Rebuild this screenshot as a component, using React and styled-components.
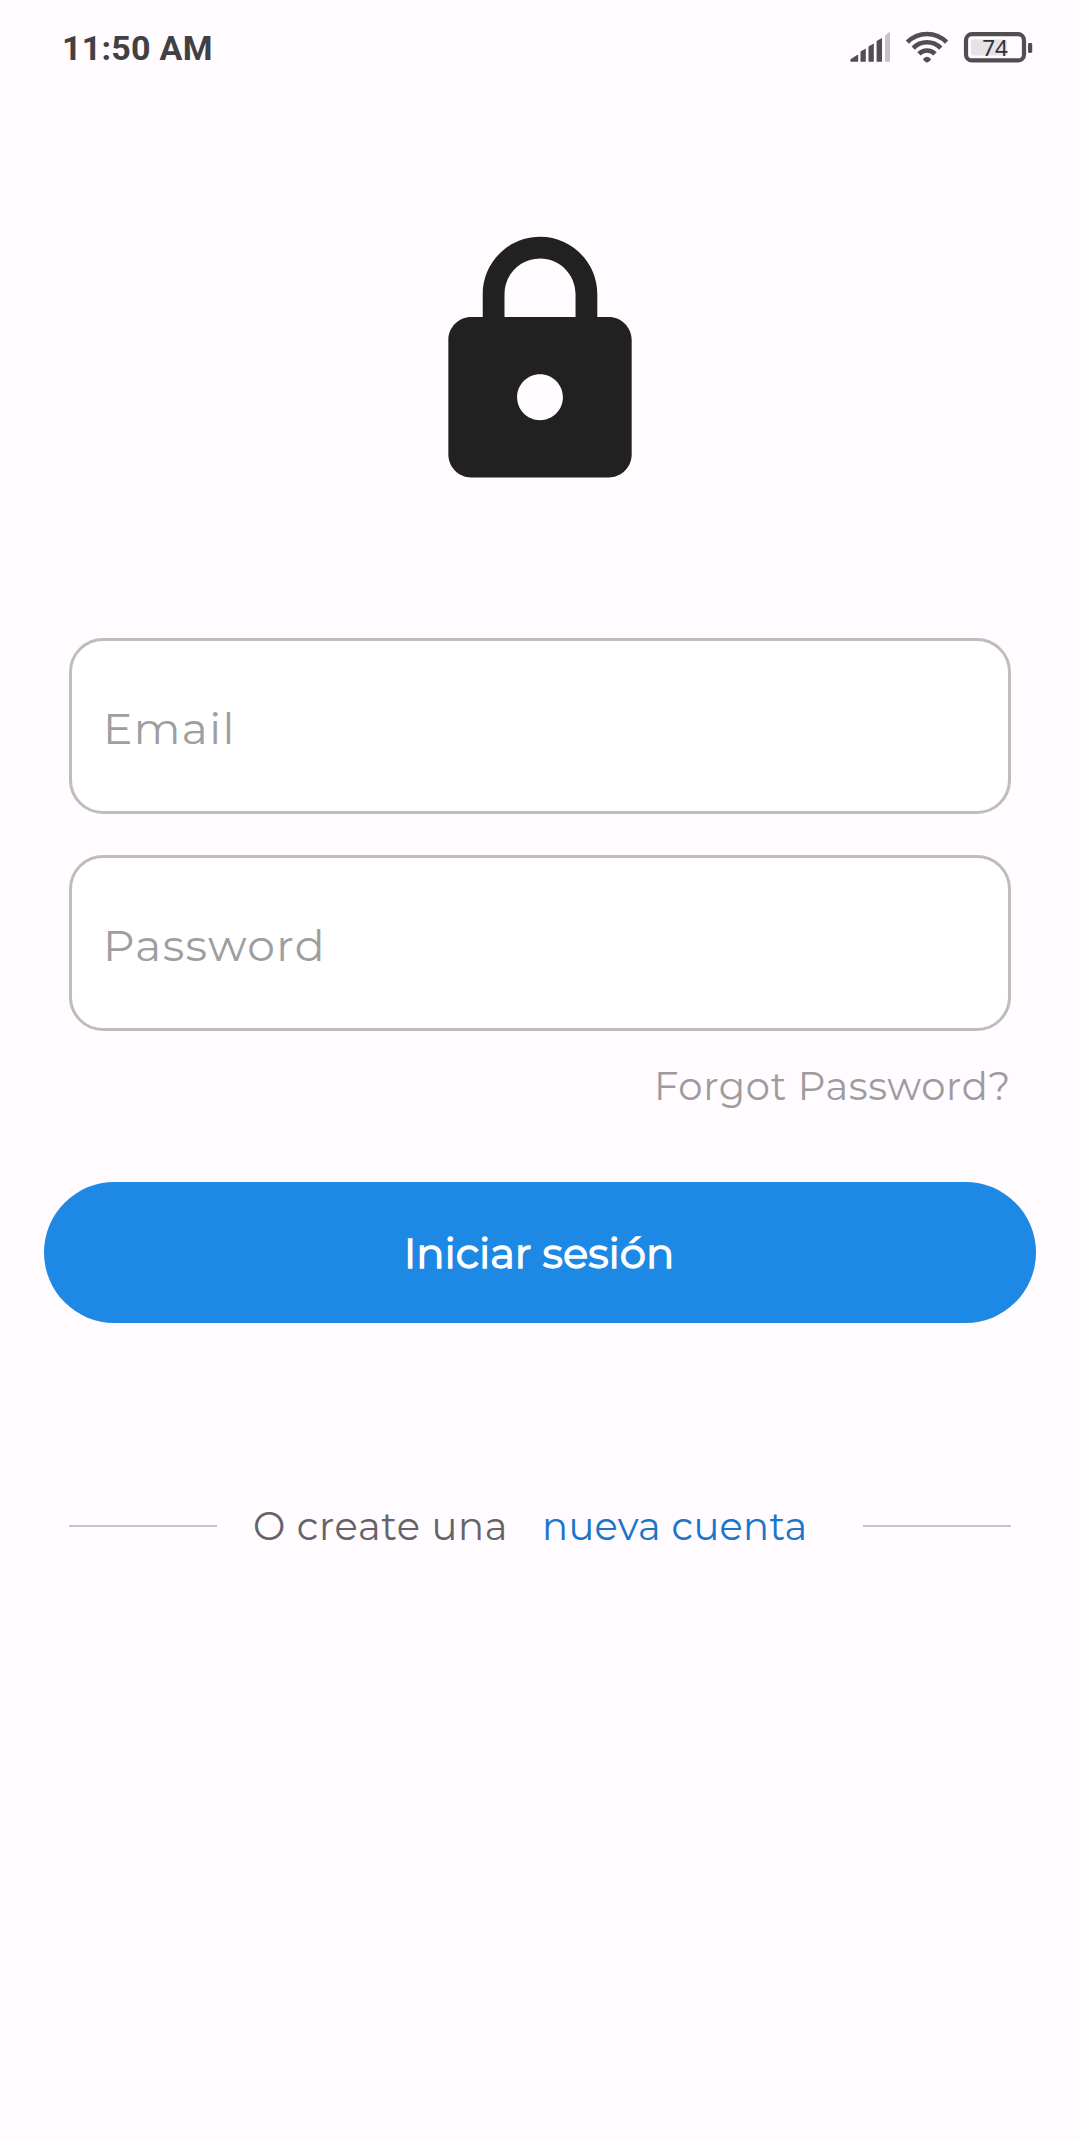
import React from "react";
import styled, { createGlobalStyle } from "styled-components";

const GlobalStyle = createGlobalStyle`
  * { box-sizing: border-box; }
  body { margin: 0; background: #fffbff; }
`;

const Screen = styled.main`
  display: flex;
  flex-direction: column;
  width: 1080px;
  height: 2139px;
  overflow: hidden;
  background: #fffbff;
  font-family: Montserrat, Inter, "Liberation Sans", sans-serif;
`;

const StatusBar = styled.header`
  display: flex;
  justify-content: space-between;
  align-items: center;
  height: 96px;
  padding: 0 46px 0 62px;
`;

const Clock = styled.time`
  font: 700 34px/40px Roboto, sans-serif;
  letter-spacing: 0.25px;
  color: #414043;
`;

const StatusIcons = styled.svg`
  display: block;
  width: 186px;
  height: 36px;
`;

const BatteryLevel = styled.text`
  font: 400 22.5px "Noto Sans", sans-serif;
  fill: #333135;
`;

const LockIcon = styled.svg`
  display: block;
  width: 275px;
  height: 275px;
  margin: 129px 0 138px 402px;
  fill: #212121;
`;

const Form = styled.form`
  display: flex;
  flex-direction: column;
  padding: 0 44px;
`;

const Fields = styled.div`
  display: flex;
  flex-direction: column;
  gap: 41px;
  padding: 0 25px;
`;

const Input = styled.input`
  width: 100%;
  height: 176px;
  padding: 4px 31px 0;
  border: 3px solid #bdbdbd;
  border-radius: 34px;
  outline: 0;
  background: #fff;
  font: 400 44px/54px Montserrat, Inter, sans-serif;
  letter-spacing: 1.375px;
  &::placeholder { color: #9e9e9e; opacity: 1; }
`;

const Forgot = styled.a`
  align-self: flex-end;
  margin: 31px 25px 0 0;
  font-size: 38.5px;
  font-weight: 400;
  line-height: 50px;
  letter-spacing: 0.67px;
  color: #9e9b9f;
`;

const SubmitButton = styled.button`
  height: 141px;
  margin-top: 70px;
  padding: 1px 2px 0 0;
  border: 0;
  border-radius: 70.5px;
  background: #1e88e5;
  color: #fff;
  font: 400 41.8px/54px Montserrat, Inter, sans-serif;
  -webkit-text-stroke: 1.3px #fff;
`;

const SignupRow = styled.footer`
  display: flex;
  align-items: center;
  margin-top: 177px;
  padding: 0 69px;
  font-size: 38.5px;
  font-weight: 400;
  line-height: 50px;
  white-space: nowrap;
`;

const Rule = styled.span`
  width: 148px;
  height: 2px;
  background: #c7c4c8;
`;

const Prompt = styled.span`
  margin: 2px 0 0 36px;
  letter-spacing: 0.65px;
  color: #666367;
`;

const SignupLink = styled.a`
  margin: 2px auto 0 34px;
  letter-spacing: 0.28px;
  color: #1976c8;
`;

export default function App() {
  return (
    <Screen>
      <GlobalStyle />
      <StatusBar>
        <Clock>11:50 AM</Clock>
        <StatusIcons viewBox="848 29 186 36" aria-label="Signal, Wi-Fi, battery 74%">
          <g fill="#504e52">
            <path d="M851 60V58.8L857.5 54.5V60Z" stroke="#504e52" strokeWidth="1.4" strokeLinejoin="round" />
            <path d="M860.5 50.5L865.8 47.5V60.7H860.5Z" />
            <path d="M868.5 45.5L873.8 42.5V60.7H868.5Z" />
            <path d="M876.6 40L882 37V60.7H876.6Z" />
          </g>
          <path d="M885 35L888.5 31.6H890V60.7H885Z" fill="#c6c3c7" />
          <g fill="none" stroke="#504e52" strokeWidth="4.6">
            <path d="M907.4 41.2A27.4 27.4 0 0 1 946.6 41.2" />
            <path d="M913.2 47.1A19.3 19.3 0 0 1 940.8 47.1" />
            <path d="M919 52.8A11.2 11.2 0 0 1 935 52.8" />
          </g>
          <path d="M923.7 57.2Q927 54.2 930.3 57.2Q931.3 58.2 930.3 59.2L928 61.2Q927 62 926 61.2L923.7 59.2Q922.7 58.2 923.7 57.2Z" fill="#504e52" />
          <rect x="971" y="38.5" width="36" height="16" rx="2" fill="#e6e2e7" />
          <rect x="966" y="33.2" width="58" height="26.2" rx="6" fill="none" stroke="#504e52" strokeWidth="4.2" />
          <rect x="1028" y="42" width="4.2" height="10" rx="1.4" fill="#504e52" />
          <BatteryLevel x="995" y="55.2" textAnchor="middle">74</BatteryLevel>
        </StatusIcons>
      </StatusBar>
      <LockIcon viewBox="-0.045 -0.03 24 24">
        <path d="M18 8h-1V6c0-2.76-2.24-5-5-5S7 3.24 7 6v2H6c-1.1 0-2 .9-2 2v10c0 1.1.9 2 2 2h12c1.1 0 2-.9 2-2V10c0-1.1-.9-2-2-2zm-6 9c-1.1 0-2-.9-2-2s.9-2 2-2 2 .9 2 2-.9 2-2 2zm3.1-9H8.9V6c0-1.71 1.39-3.1 3.1-3.1 1.71 0 3.1 1.39 3.1 3.1v2z" />
      </LockIcon>
      <Form onSubmit={(e) => e.preventDefault()}>
        <Fields>
          <Input placeholder="Email" type="email" />
          <Input placeholder="Password" type="password" />
        </Fields>
        <Forgot>Forgot Password?</Forgot>
        <SubmitButton>Iniciar sesión</SubmitButton>
      </Form>
      <SignupRow>
        <Rule />
        <Prompt>O create una</Prompt>
        <SignupLink>nueva cuenta</SignupLink>
        <Rule />
      </SignupRow>
    </Screen>
  );
}
